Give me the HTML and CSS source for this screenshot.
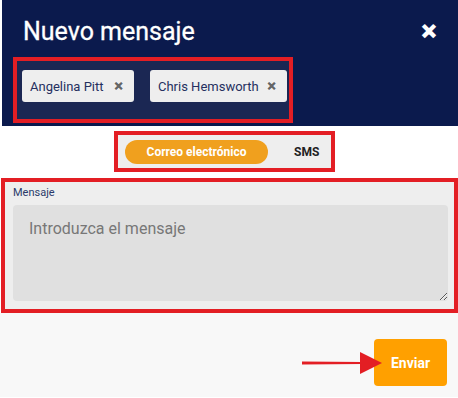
FILE: index.html
```html
<!DOCTYPE html>
<html lang="es">
<head>
    <meta charset="UTF-8">
    <meta name="viewport" content="width=device-width, initial-scale=1.0">
    <title>Nuevo mensaje</title>
    <link rel="stylesheet" href="styles.css">
</head>
<body>
    <div class="header">
        <div class="header-top">
            <h1>Nuevo mensaje</h1>
            <span class="close">&#x2715;</span>
        </div>
        <div class="recipients">
            <span class="chip chip-short">Angelina Pitt <span class="chip-x">&#x2715;</span></span>
            <span class="chip chip-long">Chris Hemsworth <span class="chip-x">&#x2715;</span></span>
        </div>
    </div>

    <div class="toggle-row">
        <div class="toggle">
            <span class="tab active">Correo electrónico</span>
            <span class="tab">SMS</span>
        </div>
    </div>

    <div class="message">
        <label for="msg">Mensaje</label>
        <textarea id="msg" placeholder="Introduzca el mensaje"></textarea>
    </div>

    <div class="footer">
        <svg class="arrow" width="82" height="24" viewBox="0 0 82 24">
            <path d="M0 10.5 L60 11 L60 13 L0 13.5 Z" fill="#e31e24"/>
            <path d="M58 1 L80 12 L58 23 Z" fill="#e31e24"/>
        </svg>
        <button class="send">Enviar</button>
    </div>
</body>
</html>
```

FILE: styles.css
```css
body {
    margin: 0;
    font-family: Roboto, "Liberation Sans", sans-serif;
    background: #fff;
    width: 458px;
}

.header {
    margin-left: 2px;
    height: 126px;
    background: #0b1a4d;
    box-sizing: border-box;
    padding-top: 18px;
}

.header-top {
    display: flex;
    justify-content: space-between;
    align-items: center;
    padding: 0 21px;
}

.header h1 {
    margin: 0;
    color: #fff;
    font-size: 25px;
    font-weight: 400;
    line-height: 28px;
    -webkit-text-stroke: 0.3px #fff;
}

.close {
    color: #fff;
    font-size: 19px;
    font-weight: 900;
    line-height: 28px;
    -webkit-text-stroke: 1.5px #fff;
}

.recipients {
    margin: 11px 0 0 11px;
    width: 280px;
    height: 66px;
    box-sizing: border-box;
    border: 4px solid #e31e24;
    background: #1b2753;
    display: flex;
    gap: 16px;
    padding: 9px 0 0 5px;
}

.chip {
    flex: none;
    height: 32px;
    box-sizing: border-box;
    background: #eeeeee;
    border-radius: 3px;
    display: flex;
    align-items: center;
    justify-content: space-between;
    padding: 0 11px 0 8px;
    color: #25305f;
    font-size: 13px;
    white-space: nowrap;
}

.chip-short {
    width: 112px;
}

.chip-long {
    width: 137px;
}

.chip-x {
    color: #666;
    font-size: 11px;
    font-weight: 900;
    -webkit-text-stroke: 0.6px #666;
}

.toggle-row {
    padding: 5px 0 0 114px;
}

.toggle {
    width: 221px;
    height: 41px;
    box-sizing: border-box;
    border: 4px solid #e31e24;
    background: #eeeeee;
    display: flex;
    align-items: center;
    padding-left: 7px;
}

.tab {
    font-size: 12px;
    font-weight: 700;
    color: #222;
}

.tab.active {
    width: 143px;
    height: 24px;
    line-height: 24px;
    text-align: center;
    background: #f0a01e;
    color: #fff;
    border-radius: 12px;
    margin-right: 26px;
}

.message {
    margin: 6px 0 0 1px;
    border: 4px solid #e31e24;
    background: #eeeeee;
    padding: 3px 6px 8px 8px;
    display: flex;
    flex-direction: column;
}

.message label {
    font-size: 11px;
    line-height: 16px;
    color: #2b3a6b;
    margin-bottom: 4px;
}

.message textarea {
    height: 96px;
    box-sizing: border-box;
    border: none;
    border-radius: 4px;
    background: #e0e0e0;
    padding: 14px 16px;
    font-family: Roboto, "Liberation Sans", sans-serif;
    font-size: 16px;
    color: #333;
    outline: none;
    resize: vertical;
}

.message textarea::placeholder {
    color: #777;
}

.footer {
    position: relative;
    background: #f8f8f8;
    height: 84px;
    display: flex;
    justify-content: flex-end;
    padding: 26px 11px 0 0;
    box-sizing: border-box;
}

.arrow {
    position: absolute;
    left: 302px;
    top: 38px;
}

.send {
    width: 73px;
    height: 47px;
    border: none;
    border-radius: 4px;
    background: #ffa000;
    color: #fff;
    font-family: Roboto, "Liberation Sans", sans-serif;
    font-size: 14px;
    font-weight: 700;
}
```
